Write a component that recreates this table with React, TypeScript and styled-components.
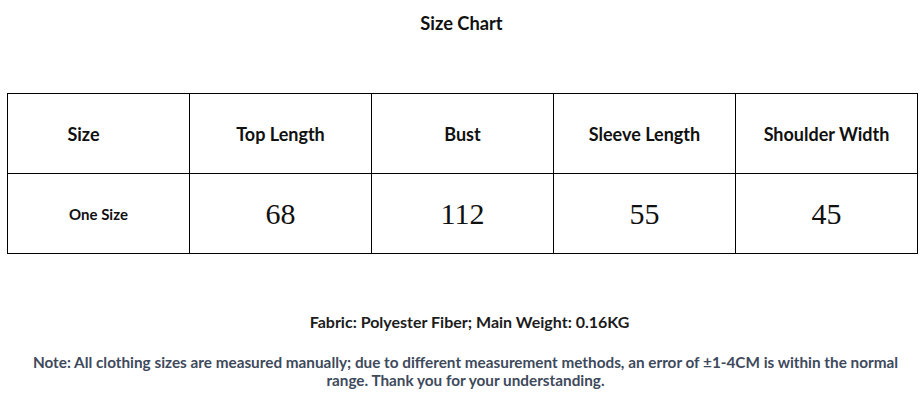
import * as React from 'react'
import styled, { createGlobalStyle } from 'styled-components'

const GlobalStyle = createGlobalStyle`
  html, body {
    margin: 0;
    padding: 0;
    background: #ffffff;
  }
  body {
    font-family: Lato, 'Noto Sans', sans-serif;
  }
`

const Page = styled.div`
  width: 923px;
  height: 419px;
  display: flex;
  flex-direction: column;
  align-items: center;
  overflow: hidden;
`

const Title = styled.h1`
  margin: 12px 0 0;
  font-size: 18.3px;
  line-height: 23px;
  font-weight: 700;
  color: #111111;
`

const Chart = styled.table`
  align-self: flex-start;
  margin: 58px 0 0 7px;
  width: 911px;
  border-collapse: collapse;
  table-layout: fixed;
`

const Cell = styled.td<{ $serif?: boolean; $small?: boolean; $shift?: number }>`
  height: 79px;
  padding: 0 ${({ $shift }) => ($shift ? `${$shift}px` : 0)} 0 0;
  border: 1px solid #000000;
  text-align: center;
  vertical-align: middle;
  color: #111111;
  font-family: ${({ $serif }) => ($serif ? "'Liberation Serif', 'Times New Roman', serif" : "Lato, 'Noto Sans', sans-serif")};
  font-weight: ${({ $serif }) => ($serif ? 400 : 700)};
  font-size: ${({ $serif, $small }) => ($serif ? '30px' : $small ? '15px' : '18px')};
`

const Fabric = styled.p`
  margin: 59px 0 0;
  padding-left: 16px;
  font-size: 16px;
  line-height: 18px;
  font-weight: 700;
  color: #1c1c1c;
`

const Note = styled.p`
  margin: 22px 0 0;
  padding-left: 8px;
  width: 880px;
  text-align: center;
  font-size: 15.3px;
  line-height: 18px;
  font-weight: 700;
  color: #3e4a5c;
`

const headers = ['Top Length', 'Bust', 'Sleeve Length', 'Shoulder Width']
const values = ['68', '112', '55', '45']

const App: React.FC = () => (
  <>
    <GlobalStyle />
    <Page>
      <Title>Size Chart</Title>
      <Chart>
        <tbody>
          <tr>
            <Cell $shift={30}>Size</Cell>
            {headers.map(h => (
              <Cell key={h}>{h}</Cell>
            ))}
          </tr>
          <tr>
            <Cell $small>One Size</Cell>
            {values.map(v => (
              <Cell key={v} $serif>
                {v}
              </Cell>
            ))}
          </tr>
        </tbody>
      </Chart>
      <Fabric>Fabric: Polyester Fiber; Main Weight: 0.16KG</Fabric>
      <Note>
        Note: All clothing sizes are measured manually; due to different measurement methods, an error of ±1-4CM is within the normal range. Thank you for your understanding.
      </Note>
    </Page>
  </>
)

export default App
